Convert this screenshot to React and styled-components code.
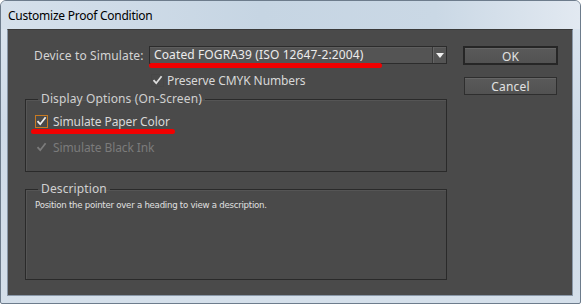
import React from "react";
import styled, { createGlobalStyle } from "styled-components";

const Global = createGlobalStyle`
  html, body { margin: 0; padding: 0; background: #ffffff; }
  body { font-family: "Noto Sans", "Open Sans", sans-serif; }
  * { box-sizing: border-box; }
`;

const Window = styled.div`
  width: 581px;
  height: 304px;
  display: flex;
  flex-direction: column;
  background: linear-gradient(180deg, #dce6f0 0%, #cfdbe8 40%, #d4dfea 100%);
  border: 1px solid #6d7c8c;
  border-radius: 6px 6px 2px 2px;
  overflow: hidden;
`;

const TitleBar = styled.div`
  height: 28px;
  flex: none;
  display: flex;
  align-items: center;
  padding-left: 7px;
  padding-top: 1px;
  font-family: "Noto Sans", sans-serif;
  font-size: 12px;
  letter-spacing: -0.25px;
  color: #000;
  background: linear-gradient(90deg, #d5e0eb 0%, #c6d5e3 45%, #cad8e5 75%, #e2e9f1 100%);
`;

const Body = styled.div`
  margin: 0 7px 7px 6px;
  flex: 1;
  background: #4a4a4a;
  border: 1px solid #8a98a8;
  border-top-color: #3a3a3a;
  display: flex;
  padding: 16px 0 0 17px;
  font-family: "Noto Sans", sans-serif;
  font-size: 12px;
  letter-spacing: 0.12px;
  color: #d4d4d4;
`;

const LeftCol = styled.div`
  width: 422px;
  display: flex;
  flex-direction: column;
`;

const RightCol = styled.div`
  margin-left: 16px;
  display: flex;
  flex-direction: column;
  align-items: flex-start;
`;

const DeviceRow = styled.div`
  position: relative;
  height: 18px;
  display: flex;
  align-items: center;
`;

const Label = styled.span`
  width: 124px;
  padding-left: 9px;
  white-space: nowrap;
`;

const Select = styled.div`
  width: 298px;
  height: 18px;
  display: flex;
  align-items: stretch;
  background: #545454;
  border: 1px solid #2c2c2c;
  box-shadow: inset 0 1px 0 #5e5e5e;
  color: #ececec;
`;

const SelectText = styled.span`
  flex: 1;
  padding-left: 4px;
  line-height: 15px;
  white-space: nowrap;
`;

const ArrowBox = styled.span`
  width: 14px;
  display: flex;
  align-items: center;
  justify-content: center;
  border-left: 1px solid #3a3a3a;
  box-shadow: inset 1px 0 0 #656565;
`;

const Mark = styled.div`
  position: absolute;
  height: 5px;
  background: #f10000;
  border-radius: 3px;
  left: ${(p) => p.$left}px;
  width: ${(p) => p.$width}px;
  top: ${(p) => p.$top}px;
`;

const CheckRow = styled.div`
  position: relative;
  display: flex;
  align-items: center;
  height: 14px;
  margin-top: ${(p) => p.$mt || 0}px;
  padding-left: ${(p) => p.$pl || 0}px;
  letter-spacing: -0.1px;
  color: ${(p) => (p.$disabled ? "#7b7b7b" : "#d8d8d8")};
  white-space: nowrap;
`;

const Box = styled.span`
  width: 13px;
  height: 13px;
  flex: none;
  margin-right: ${(p) => p.$gap}px;
  display: flex;
  align-items: center;
  justify-content: center;
  border: 1px solid ${(p) => p.$border};
  background: ${(p) => p.$bg};
`;

const Group = styled.fieldset`
  margin: ${(p) => p.$mt}px 0 0 0;
  padding: 0 0 0 9px;
  height: ${(p) => p.$h}px;
  min-width: 0;
  border: 1px solid #2a2a2a;
  box-shadow: inset 1px 1px 0 #555555;
  display: flex;
  flex-direction: column;
`;

const Legend = styled.legend`
  margin-left: 3px;
  padding: 0 3px;
  line-height: 16px;
  color: #d0d0d0;
`;

const DescText = styled.div`
  margin-top: 2px;
  font-family: "DejaVu Sans", sans-serif;
  font-size: 8.6px;
  letter-spacing: -0.25px;
  line-height: 12px;
  color: #e0e0e0;
`;

const Button = styled.button`
  width: ${(p) => p.$w}px;
  height: ${(p) => p.$h}px;
  margin: ${(p) => p.$m};
  padding: 0;
  font-family: "Noto Sans", sans-serif;
  font-size: 12px;
  letter-spacing: 0.2px;
  color: #e2e2e2;
  background: linear-gradient(180deg, #5a5a5a 0%, #525252 100%);
  border: ${(p) => (p.$default ? "2px solid #262626" : "1px solid #2e2e2e")};
  box-shadow: inset 0 1px 0 #666;
  border-radius: 0;
`;

const Check = ({ color }) => (
  <svg width="11" height="10" viewBox="0 0 11 10">
    <path d="M1.5 5.2 L4.2 8.2 L9.6 1.2" fill="none" stroke={color} strokeWidth="1.8" />
  </svg>
);

export default function App() {
  return (
    <>
      <Global />
      <Window>
        <TitleBar>Customize Proof Condition</TitleBar>
        <Body>
          <LeftCol>
            <DeviceRow>
              <Label>Device to Simulate:</Label>
              <Select>
                <SelectText>Coated FOGRA39 (ISO 12647-2:2004)</SelectText>
                <ArrowBox>
                  <svg width="8" height="5" viewBox="0 0 8 5">
                    <path d="M0 0 H8 L4 5 Z" fill="#f0f0f0" />
                  </svg>
                </ArrowBox>
              </Select>
              <Mark $left={124} $width={233} $top={17} />
            </DeviceRow>
            <CheckRow $mt={9} $pl={126}>
              <Box $gap={3} $border="#474747" $bg="transparent">
                <Check color="#dcdcdc" />
              </Box>
              Preserve CMYK Numbers
            </CheckRow>
            <Group $mt={4} $h={81}>
              <Legend>Display Options (On-Screen)</Legend>
              <CheckRow $mt={7}>
                <Box $gap={5} $border="#c87a22" $bg="#4a4a4a">
                  <Check color="#ececec" />
                </Box>
                Simulate Paper Color
                <Mark $left={-4} $width={144} $top={15} />
              </CheckRow>
              <CheckRow $mt={12} $disabled>
                <Box $gap={5} $border="transparent" $bg="transparent">
                  <Check color="#7b7b7b" />
                </Box>
                Simulate Black Ink
              </CheckRow>
            </Group>
            <Group $mt={9} $h={99}>
              <Legend>Description</Legend>
              <DescText>Position the pointer over a heading to view a description.</DescText>
            </Group>
          </LeftCol>
          <RightCol>
            <Button $default $w={95} $h={19} $m="0 0 0 0">OK</Button>
            <Button $w={93} $h={18} $m="12px 0 0 1px">Cancel</Button>
          </RightCol>
        </Body>
      </Window>
    </>
  );
}
